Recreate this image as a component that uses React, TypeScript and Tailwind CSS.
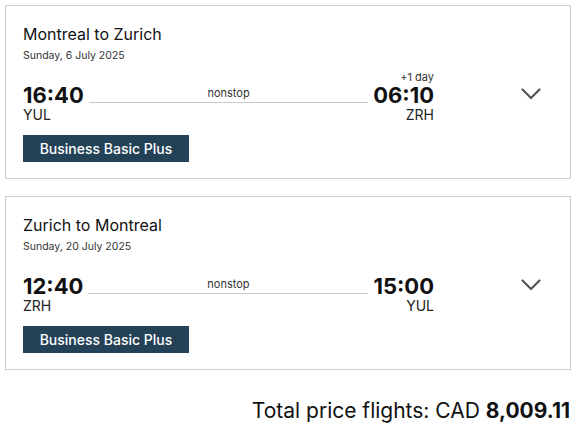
import React from 'react';

interface Leg {
  title: string;
  date: string;
  depTime: string;
  depCode: string;
  arrTime: string;
  arrCode: string;
  dayOffset?: string;
  fare: string;
}

const legs: Leg[] = [
  {
    title: 'Montreal to Zurich',
    date: 'Sunday, 6 July 2025',
    depTime: '16:40',
    depCode: 'YUL',
    arrTime: '06:10',
    arrCode: 'ZRH',
    dayOffset: '+1 day',
    fare: 'Business Basic Plus',
  },
  {
    title: 'Zurich to Montreal',
    date: 'Sunday, 20 July 2025',
    depTime: '12:40',
    depCode: 'ZRH',
    arrTime: '15:00',
    arrCode: 'YUL',
    fare: 'Business Basic Plus',
  },
];

function Chevron() {
  return (
    <svg width="20" height="12" viewBox="0 0 20 12" fill="none">
      <path d="M1.5 1.5 L10 10 L18.5 1.5" stroke="#555" strokeWidth="2.2" strokeLinecap="round" />
    </svg>
  );
}

function LegCard({ leg }: { leg: Leg }) {
  return (
    <div className="w-[566px] border border-[#cccccc] bg-white pl-[17px] pt-[16px] pb-[16px]">
      <div className="text-[16px] leading-[24px] text-[#111]">{leg.title}</div>
      <div className="mt-[2px] text-[10.5px] leading-[16px] text-[#333]">{leg.date}</div>

      <div className="flex items-start mt-[19px]">
        <div className="flex w-[411px] items-start">
          <div className="flex flex-col">
            <span className="text-[22px] leading-[24px] font-bold text-[#111]">{leg.depTime}</span>
            <span className="text-[14px] leading-[16px] text-[#222]">{leg.depCode}</span>
          </div>
          <div className="flex-1 mx-[5px] pt-[3px]">
            <div className="text-center text-[11px] leading-[14px] text-[#333] pb-[2px] border-b border-[#c8c8c8]">
              nonstop
            </div>
          </div>
          <div className="relative flex flex-col items-end">
            {leg.dayOffset && (
              <span className="absolute bottom-full right-0 mb-[-1px] whitespace-nowrap text-[11px] leading-[14px] text-[#333]">
                {leg.dayOffset}
              </span>
            )}
            <span className="text-[22px] leading-[24px] font-bold text-[#111]">{leg.arrTime}</span>
            <span className="text-[14px] leading-[16px] text-[#222]">{leg.arrCode}</span>
          </div>
        </div>
        <div className="ml-[87px] mt-[5px]">
          <Chevron />
        </div>
      </div>

      <div className="mt-[12px] flex h-[27px] w-[166px] items-center justify-center bg-[#234257] text-[14px] font-medium text-white">
        {leg.fare}
      </div>
    </div>
  );
}

export default function App() {
  return (
    <div
      className="min-h-[429px] w-[584px] bg-white pl-[5px] pt-[5px]"
      style={{ fontFamily: 'Inter, "Liberation Sans", sans-serif' }}
    >
      <div className="flex flex-col gap-[17px]">
        {legs.map((leg) => (
          <LegCard key={leg.title} leg={leg} />
        ))}
      </div>
      <div className="mt-[27px] w-[566px] pr-[1px] text-right text-[21px] leading-[28px] text-[#111]">
        Total price flights: CAD <span className="font-bold">8,009.11</span>
      </div>
    </div>
  );
}
